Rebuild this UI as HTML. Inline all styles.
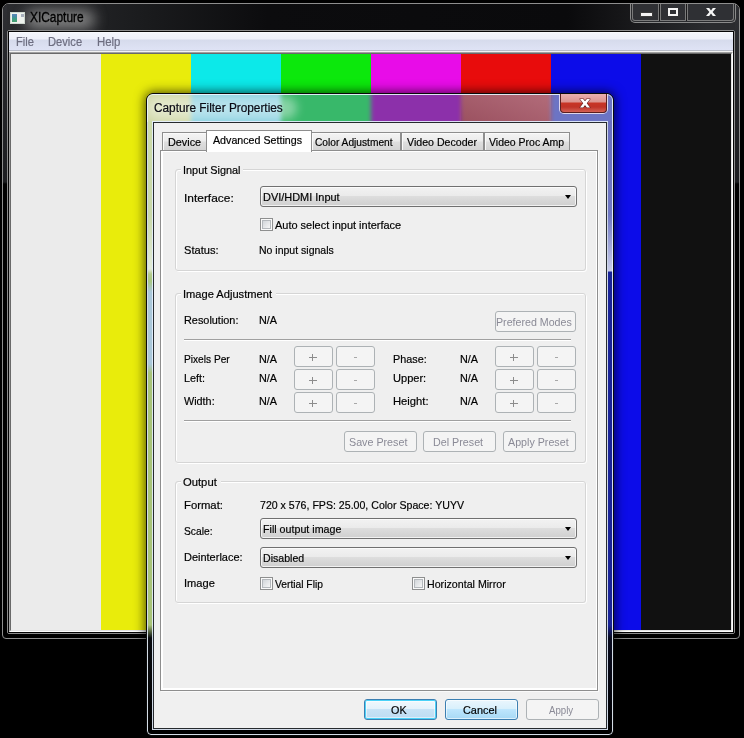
<!DOCTYPE html>
<html><head><meta charset="utf-8">
<style>
*{box-sizing:border-box;margin:0;padding:0}
html,body{width:744px;height:738px;overflow:hidden;background:#000}
body{position:relative;font-family:"Liberation Sans",sans-serif;font-size:11.75px;color:#000}
.a{position:absolute}
.t{position:absolute;white-space:nowrap;transform-origin:0 0;line-height:14px;color:#000;-webkit-text-stroke:0.2px currentColor}
.pn{position:absolute;border:1px solid #8e8e8e}
.tab{position:absolute;border:1px solid #8e8e8e;border-bottom:none;background:linear-gradient(180deg,#f4f4f4 0,#ececec 45%,#dedede 55%,#d4d4d4 100%);box-shadow:inset 1px 1px 0 #fafafa}
.g1{position:absolute;border:1px solid #d5d5d5;border-radius:3px}
.g2{position:absolute;border:1px solid #fff;border-radius:3px}
.lb{position:absolute;background:#efefef;height:14px}
.cmb{position:absolute;border:1px solid #707070;border-radius:3px;background:linear-gradient(180deg,#f2f2f2 0,#ebebeb 45%,#dddddd 50%,#cfcfcf 100%);box-shadow:inset 0 0 0 1px rgba(255,255,255,.7)}
.arr{position:absolute;width:0;height:0;border-left:3.5px solid transparent;border-right:3.5px solid transparent;border-top:4px solid #000}
.chk{position:absolute;width:13px;height:13px;border:1px solid #8e8f8f;background:#fafafa}
.chk:after{content:"";box-sizing:border-box;position:absolute;left:1px;top:1px;width:9px;height:9px;border:1px solid #b4b8bc;background:linear-gradient(135deg,#d2d6da,#f6f6f6)}
.db{position:absolute;border:1px solid #adb2b5;border-radius:3px;background:#f4f4f4}
.sep{position:absolute;height:2px;border-top:1px solid #a0a0a0;border-bottom:1px solid #fff}
.bb{position:absolute;border:1px solid #3c7fb1;border-radius:3px}
</style></head><body>

<div class="a" id="mw" style="left:2px;top:3px;width:738px;height:636px;border:1px solid #8e8e8e;border-radius:7px 7px 4px 4px;background:#000;overflow:hidden">
  <div class="a" style="left:0;top:0;width:736px;height:180px;background:linear-gradient(180deg,#2f3034 0,#26272a 60px,#1d1e21 178px,#000 180px)"></div>
  <div class="a" style="left:4px;top:0;width:728px;height:27px;background:linear-gradient(90deg,#2b2c2f 0,#1a1b1d 140px,#0c0c0e 260px,#0a0a0c 560px,#151517 610px,#2a2b2e 700px)"></div>
  <div class="a" style="left:22px;top:6px;width:70px;height:19px;border-radius:9px;background:#9c9c9c;filter:blur(7px);opacity:.8"></div>
  <div class="a" style="left:7px;top:8px;width:15px;height:12px;background:#eef3ee;border:1px solid #cfd8d0"></div>
  <div class="a" style="left:9px;top:10px;width:5px;height:8px;background:linear-gradient(180deg,#5a86b8 0,#4a8aa8 30%,#3c9c84 60%,#48a070 100%)"></div>
  <div class="a" style="left:14px;top:10px;width:3px;height:8px;background:#f4ecec"></div>
  <div class="a" style="left:18px;top:10px;width:3px;height:3px;background:#a8b0bc"></div>
</div>

<div class="t" style="left:30px;top:9px;font-size:14px;line-height:16px;color:#000;-webkit-text-stroke:0.35px #000;transform:scaleX(.85)">XICapture</div>

<div class="a" style="left:630px;top:4px;width:106px;height:19px;border:1px solid #8a8a8a;border-top:none;border-radius:0 0 5px 5px;background:#2a2b2e"></div>
<div class="a" style="left:632px;top:4px;width:54px;height:17px;border:1px solid #7a7a7a;border-top:none;border-radius:0 0 0 3px;background:#2f3034"></div>
<div class="a" style="left:658px;top:4px;width:3px;height:17px;border-left:1px solid #7a7a7a;border-right:1px solid #7a7a7a;background:#1a1a1c"></div>
<div class="a" style="left:685px;top:4px;width:3px;height:17px;border-left:1px solid #7a7a7a;border-right:1px solid #7a7a7a;background:#1a1a1c"></div>
<div class="a" style="left:687px;top:4px;width:47px;height:17px;border:1px solid #7a7a7a;border-top:none;border-radius:0 0 3px 0;background:#2f3034"></div>
<div class="a" style="left:641px;top:13px;width:11px;height:3px;background:#f4f4f4;box-shadow:0 0 0 1px #3c3c3c"></div>
<div class="a" style="left:668px;top:8px;width:10px;height:8px;border:2px solid #f4f4f4"></div>
<svg class="a" style="left:706px;top:8px" width="10" height="8" viewBox="0 0 10 8"><polygon points="0,0 3.2,0 5,2.4 6.8,0 10,0 6.6,4 10,8 6.8,8 5,5.6 3.2,8 0,8 3.4,4" fill="#f6f6f6"/></svg>
<div class="a" style="left:7px;top:30px;width:728px;height:604px;border:1px solid #8c8c8c;border-radius:2px"></div>
<div class="a" style="left:8px;top:31px;width:726px;height:602px;border:1px solid #050505"></div>
<div class="a" style="left:9px;top:32px;width:724px;height:20px;background:linear-gradient(180deg,#ffffff 0,#f3f5fb 1px,#eef0f9 7px,#d6dbec 8px,#dfe3f5 18px);border-bottom:1px solid #f2f2f2">
  <div class="a" style="left:0;top:18px;width:724px;height:1px;background:#b8bcc8"></div>
</div>

<div class="t" style="left:15.6px;top:35px;transform:scaleX(0.930);color:#6d6e80;font-size:12px">File</div>
<div class="t" style="left:47.8px;top:35px;transform:scaleX(0.930);color:#6d6e80;font-size:12px">Device</div>
<div class="t" style="left:97.0px;top:35px;transform:scaleX(0.950);color:#6d6e80;font-size:12px">Help</div>

<div class="a" style="left:9px;top:52px;width:724px;height:580px;border-style:solid;border-width:1px;border-color:#a0a0a0 #ffffff #ffffff #a0a0a0"></div>
<div class="a" style="left:10px;top:53px;width:722px;height:578px;border-style:solid;border-width:1px;border-color:#696969 #e3e3e3 #e3e3e3 #696969"></div>
<div class="a" style="left:11px;top:54px;width:720px;height:576px;background:linear-gradient(90deg,#ebebeb 0 90px,#e9ec0b 90px 180px,#0ce9e9 180px 270px,#0ce80c 270px 360px,#e80ce8 360px 450px,#e80c0c 450px 540px,#0c0ce9 540px 630px,#111111 630px 720px)"></div>


<div class="a" style="left:146px;top:93px;width:468px;height:643px;border-radius:7px 7px 5px 5px;box-shadow:0 0 11px 1px rgba(0,0,0,.7)"></div>
<div class="a" id="dlg" style="left:146px;top:93px;width:468px;height:643px;border:1px solid #0a0a0a;border-radius:7px 7px 5px 5px;overflow:hidden;background:#000">
  <div class="a" style="left:0;top:0;width:466px;height:28px;overflow:hidden">
    <div class="a" style="left:-10px;top:-10px;width:490px;height:50px;filter:blur(2px);background:linear-gradient(90deg,#d0d8a8 0 54px,#88d0e0 54px 144px,#38b86a 144px 234px,#8c30aa 234px 324px,#a85868 324px 414px,#6c74c4 414px 490px)"></div>
    <div class="a" style="left:314px;top:0;width:90px;height:28px;background:linear-gradient(200deg,rgba(255,255,255,.12),rgba(0,0,0,.08))"></div>
    <div class="a" style="left:0;top:3px;width:150px;height:22px;border-radius:11px;background:rgba(255,255,255,.4);filter:blur(5px)"></div>
  </div>
  <div class="a" style="left:1px;top:27px;width:5px;height:614px;background:linear-gradient(180deg,#ccdaa8 0,#c8d8a8 94px,#e2ebd8 148px,#b4cc8c 153px,#a8c880 160px,#abc8da 171px,#abc8da 243px,#a8c478 252px,#a8c478 504px,#0a0c10 517px,#000 614px)"></div>
  <div class="a" style="left:461px;top:27px;width:5px;height:614px;background:linear-gradient(180deg,#6a70c0 0,#7078c4 94px,#c8cce8 150px,#1a2498 151px,#1a2498 504px,#0a0c20 517px,#000 614px)"></div>
  <div class="a" style="left:0;top:0;width:466px;height:641px;border:1px solid rgba(235,245,255,.9);border-radius:6px 6px 4px 4px"></div>
  <div class="a" style="left:5px;top:27px;width:456px;height:609px;border:1px solid rgba(230,240,255,.9)"></div>
  <div class="a" style="left:6px;top:28px;width:454px;height:607px;border:1px solid #262a2e;background:#f0f0f0"></div>
</div>

<div class="t" style="left:153.5px;top:101px;transform:scaleX(0.985);color:#0a0a14;font-size:12px">Capture Filter Properties</div>

<div class="a" style="left:559px;top:94px;width:49px;height:20px;border:1px solid rgba(235,225,240,.9);border-top:none;border-radius:0 0 5px 5px"></div>
<div class="a" style="left:560px;top:94px;width:47px;height:19px;border:1px solid #5a1e1e;border-top:none;border-radius:0 0 4px 4px;background:linear-gradient(180deg,#eab0b0 0,#dc9490 8px,#c83426 9px,#c03228 13px,#d0584c 17px,#d86a60 19px)"></div>
<svg class="a" style="left:577.5px;top:97px" width="14" height="13" viewBox="-2 -2 14 13"><polygon points="0,0 3.1,0 5,2.3 6.9,0 10,0 6.7,4.2 10,8.5 6.9,8.5 5,6.1 3.1,8.5 0,8.5 3.3,4.2" fill="#fff" stroke="#6a2222" stroke-width="1.2" stroke-linejoin="round"/><polygon points="0,0 3.1,0 5,2.3 6.9,0 10,0 6.7,4.2 10,8.5 6.9,8.5 5,6.1 3.1,8.5 0,8.5 3.3,4.2" fill="#fff"/></svg>


<div class="pn" style="left:160px;top:150px;width:438px;height:541px;background:#efefef;box-shadow:inset 2px 1px 0 #fff,inset -1px -2px 0 #fff,1px 1px 0 #fafafa"></div>
<div class="tab" style="left:162px;top:132px;width:45px;height:18px"></div>
<div class="tab" style="left:311px;top:132px;width:90px;height:18px"></div>
<div class="tab" style="left:401px;top:132px;width:83px;height:18px"></div>
<div class="tab" style="left:484px;top:132px;width:86px;height:18px"></div>
<div class="a" style="left:206px;top:130px;width:106px;height:22px;border:1px solid #8e8e8e;border-bottom:none;background:#fff"></div>

<div class="t" style="left:167.8px;top:135px;transform:scaleX(0.923)">Device</div>
<div class="t" style="left:213.3px;top:133px;transform:scaleX(0.908)">Advanced Settings</div>
<div class="t" style="left:315.1px;top:135px;transform:scaleX(0.867)">Color Adjustment</div>
<div class="t" style="left:406.7px;top:135px;transform:scaleX(0.903)">Video Decoder</div>
<div class="t" style="left:489.1px;top:135px;transform:scaleX(0.893)">Video Proc Amp</div>
<div class="g2" style="left:176px;top:170px;width:411px;height:102px"></div><div class="g1" style="left:175px;top:169px;width:411px;height:102px"></div><div class="lb" style="left:181px;top:162px;width:62px"></div>
<div class="t" style="left:182.9px;top:163px;transform:scaleX(0.926)">Input Signal</div>
<div class="t" style="left:183.9px;top:191px;transform:scaleX(1.015)">Interface:</div>
<div class="cmb" style="left:260px;top:186px;width:317px;height:21px"></div><div class="t" style="left:263.0px;top:190px;transform:scaleX(0.931)">DVI/HDMI Input</div><div class="arr" style="left:565px;top:195px"></div>
<div class="chk" style="left:260px;top:218px"></div>
<div class="t" style="left:274.9px;top:218px;transform:scaleX(0.933)">Auto select input interface</div>
<div class="t" style="left:183.7px;top:243px;transform:scaleX(0.944)">Status:</div>
<div class="t" style="left:258.9px;top:243px;transform:scaleX(0.894)">No input signals</div>
<div class="g2" style="left:176px;top:294px;width:411px;height:170px"></div><div class="g1" style="left:175px;top:293px;width:411px;height:170px"></div><div class="lb" style="left:181px;top:286px;width:95px"></div>
<div class="t" style="left:182.6px;top:287px;transform:scaleX(0.946)">Image Adjustment</div>
<div class="t" style="left:183.6px;top:313px;transform:scaleX(0.926)">Resolution:</div>
<div class="t" style="left:258.5px;top:313px;transform:scaleX(0.921)">N/A</div>
<div class="db" style="left:495px;top:311px;width:81px;height:21px"></div>
<div class="t" style="left:495.8px;top:315px;transform:scaleX(0.906);color:#8a8a96;-webkit-text-stroke:0">Prefered Modes</div>
<div class="sep" style="left:184px;top:339px;width:387px"></div>
<div class="t" style="left:183.8px;top:352px;transform:scaleX(0.865)">Pixels Per</div>
<div class="t" style="left:258.7px;top:352px;transform:scaleX(0.921)">N/A</div>
<div class="t" style="left:183.8px;top:371px;transform:scaleX(0.920)">Left:</div>
<div class="t" style="left:258.7px;top:371px;transform:scaleX(0.921)">N/A</div>
<div class="t" style="left:183.8px;top:394px;transform:scaleX(0.920)">Width:</div>
<div class="t" style="left:258.7px;top:394px;transform:scaleX(0.921)">N/A</div>
<div class="t" style="left:392.7px;top:352px;transform:scaleX(0.923)">Phase:</div>
<div class="t" style="left:459.7px;top:352px;transform:scaleX(0.921)">N/A</div>
<div class="t" style="left:392.7px;top:371px;transform:scaleX(0.941)">Upper:</div>
<div class="t" style="left:459.7px;top:371px;transform:scaleX(0.921)">N/A</div>
<div class="t" style="left:392.6px;top:394px;transform:scaleX(0.956)">Height:</div>
<div class="t" style="left:459.7px;top:394px;transform:scaleX(0.921)">N/A</div>
<div class="db" style="left:294px;top:346px;width:39px;height:21px"></div>
<div class="db" style="left:336px;top:346px;width:39px;height:21px"></div>
<svg class="a" style="left:309px;top:354px" width="8" height="7" viewBox="0 0 8 7"><path d="M0 3.5 H8 M3.5 0 V7" stroke="#8c8c8c" stroke-width="1"/></svg>
<div class="a" style="left:354px;top:357px;width:3px;height:1px;background:#a8a8a8"></div>
<div class="db" style="left:495px;top:346px;width:39px;height:21px"></div>
<div class="db" style="left:537px;top:346px;width:39px;height:21px"></div>
<svg class="a" style="left:510px;top:354px" width="8" height="7" viewBox="0 0 8 7"><path d="M0 3.5 H8 M3.5 0 V7" stroke="#8c8c8c" stroke-width="1"/></svg>
<div class="a" style="left:555px;top:357px;width:3px;height:1px;background:#a8a8a8"></div>
<div class="db" style="left:294px;top:369px;width:39px;height:21px"></div>
<div class="db" style="left:336px;top:369px;width:39px;height:21px"></div>
<svg class="a" style="left:309px;top:377px" width="8" height="7" viewBox="0 0 8 7"><path d="M0 3.5 H8 M3.5 0 V7" stroke="#8c8c8c" stroke-width="1"/></svg>
<div class="a" style="left:354px;top:380px;width:3px;height:1px;background:#a8a8a8"></div>
<div class="db" style="left:495px;top:369px;width:39px;height:21px"></div>
<div class="db" style="left:537px;top:369px;width:39px;height:21px"></div>
<svg class="a" style="left:510px;top:377px" width="8" height="7" viewBox="0 0 8 7"><path d="M0 3.5 H8 M3.5 0 V7" stroke="#8c8c8c" stroke-width="1"/></svg>
<div class="a" style="left:555px;top:380px;width:3px;height:1px;background:#a8a8a8"></div>
<div class="db" style="left:294px;top:392px;width:39px;height:21px"></div>
<div class="db" style="left:336px;top:392px;width:39px;height:21px"></div>
<svg class="a" style="left:309px;top:400px" width="8" height="7" viewBox="0 0 8 7"><path d="M0 3.5 H8 M3.5 0 V7" stroke="#8c8c8c" stroke-width="1"/></svg>
<div class="a" style="left:354px;top:403px;width:3px;height:1px;background:#a8a8a8"></div>
<div class="db" style="left:495px;top:392px;width:39px;height:21px"></div>
<div class="db" style="left:537px;top:392px;width:39px;height:21px"></div>
<svg class="a" style="left:510px;top:400px" width="8" height="7" viewBox="0 0 8 7"><path d="M0 3.5 H8 M3.5 0 V7" stroke="#8c8c8c" stroke-width="1"/></svg>
<div class="a" style="left:555px;top:403px;width:3px;height:1px;background:#a8a8a8"></div>
<div class="sep" style="left:184px;top:420px;width:387px"></div>
<div class="db" style="left:344px;top:431px;width:73px;height:21px"></div>
<div class="db" style="left:423px;top:431px;width:73px;height:21px"></div>
<div class="db" style="left:503px;top:431px;width:73px;height:21px"></div>
<div class="t" style="left:349.4px;top:435px;transform:scaleX(0.912);color:#8a8a96;-webkit-text-stroke:0">Save Preset</div>
<div class="t" style="left:433.3px;top:435px;transform:scaleX(0.913);color:#8a8a96;-webkit-text-stroke:0">Del Preset</div>
<div class="t" style="left:507.8px;top:435px;transform:scaleX(0.910);color:#8a8a96;-webkit-text-stroke:0">Apply Preset</div>
<div class="g2" style="left:176px;top:482px;width:411px;height:122px"></div><div class="g1" style="left:175px;top:481px;width:411px;height:122px"></div><div class="lb" style="left:181px;top:474px;width:40px"></div>
<div class="t" style="left:183.0px;top:475px;transform:scaleX(0.957)">Output</div>
<div class="t" style="left:183.8px;top:498px;transform:scaleX(0.962)">Format:</div>
<div class="t" style="left:259.7px;top:498px;transform:scaleX(0.901)">720 x 576, FPS: 25.00, Color Space: YUYV</div>
<div class="t" style="left:183.8px;top:524px;transform:scaleX(0.875)">Scale:</div>
<div class="cmb" style="left:260px;top:518px;width:317px;height:21px"></div><div class="t" style="left:262.8px;top:522px;transform:scaleX(0.909)">Fill output image</div><div class="arr" style="left:565px;top:527px"></div>
<div class="t" style="left:183.8px;top:550px;transform:scaleX(0.934)">Deinterlace:</div>
<div class="cmb" style="left:260px;top:547px;width:317px;height:21px"></div><div class="t" style="left:262.5px;top:551px;transform:scaleX(0.900)">Disabled</div><div class="arr" style="left:565px;top:556px"></div>
<div class="t" style="left:183.8px;top:576px;transform:scaleX(0.945)">Image</div>
<div class="chk" style="left:260px;top:577px"></div>
<div class="t" style="left:274.8px;top:577px;transform:scaleX(0.873)">Vertial Flip</div>
<div class="chk" style="left:412px;top:577px"></div>
<div class="t" style="left:426.8px;top:577px;transform:scaleX(0.906)">Horizontal Mirror</div>
<div class="bb" style="left:364px;top:699px;width:73px;height:21px;background:linear-gradient(180deg,#f2f9fd 0,#e4f2fb 45%,#c8e3f6 50%,#bddcf2 100%);box-shadow:inset 0 0 0 1px #4cd2f8,inset 0 0 0 2px rgba(255,255,255,.5)"></div>
<div class="bb" style="left:445px;top:699px;width:73px;height:21px;background:linear-gradient(180deg,#eaf6fd 0,#d9f0fc 45%,#bee6fd 50%,#a7d9f5 100%);box-shadow:inset 0 0 0 1px rgba(255,255,255,.6)"></div>
<div class="db" style="left:526px;top:699px;width:73px;height:21px"></div>
<div class="t" style="left:391.2px;top:703px;transform:scaleX(0.918)">OK</div>
<div class="t" style="left:463.2px;top:703px;transform:scaleX(0.928)">Cancel</div>
<div class="t" style="left:548.6px;top:703px;transform:scaleX(0.823);color:#8a8a96;-webkit-text-stroke:0">Apply</div>
</body></html>
